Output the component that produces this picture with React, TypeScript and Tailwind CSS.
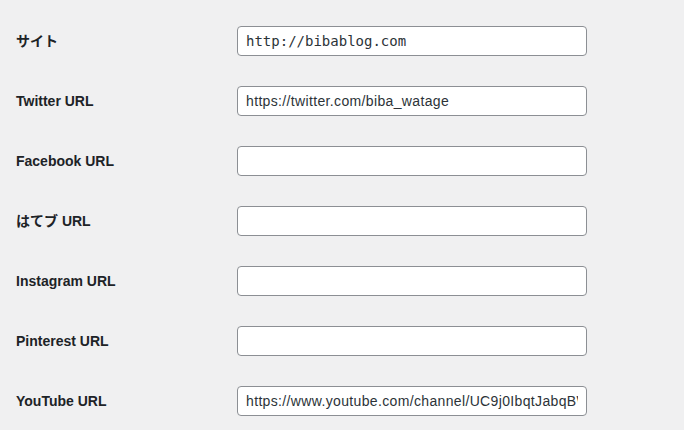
import React from "react";

const fields = [
  { label: "サイト", value: "http://bibablog.com", mono: true },
  { label: "Twitter URL", value: "https://twitter.com/biba_watage" },
  { label: "Facebook URL", value: "" },
  { label: "はてブ URL", value: "" },
  { label: "Instagram URL", value: "" },
  { label: "Pinterest URL", value: "" },
  { label: "YouTube URL", value: "https://www.youtube.com/channel/UC9j0IbqtJabqBWq2pS6vxHg" },
];

const App = () => {
  return (
    <div
      className="w-[684px] h-[430px] overflow-hidden bg-[#f0f0f1] pt-[11px] pl-4 text-[#1d2327]"
      style={{ fontFamily: '"Liberation Sans", "Noto Sans CJK JP", sans-serif' }}
    >
      {fields.map((f) => (
        <div key={f.label} className="flex items-center h-[60px]">
          <label className="w-[221px] text-[14px] font-semibold">{f.label}</label>
          <input
            type="text"
            defaultValue={f.value}
            className={
              "w-[350px] h-[30px] rounded-[4px] border border-[#8c8f94] bg-white px-2 text-[14px] text-[#2c3338] outline-none " +
              (f.mono ? "font-['DejaVu_Sans_Mono',monospace]" : "tracking-[0.35px]")
            }
          />
        </div>
      ))}
    </div>
  );
};

export default App;
